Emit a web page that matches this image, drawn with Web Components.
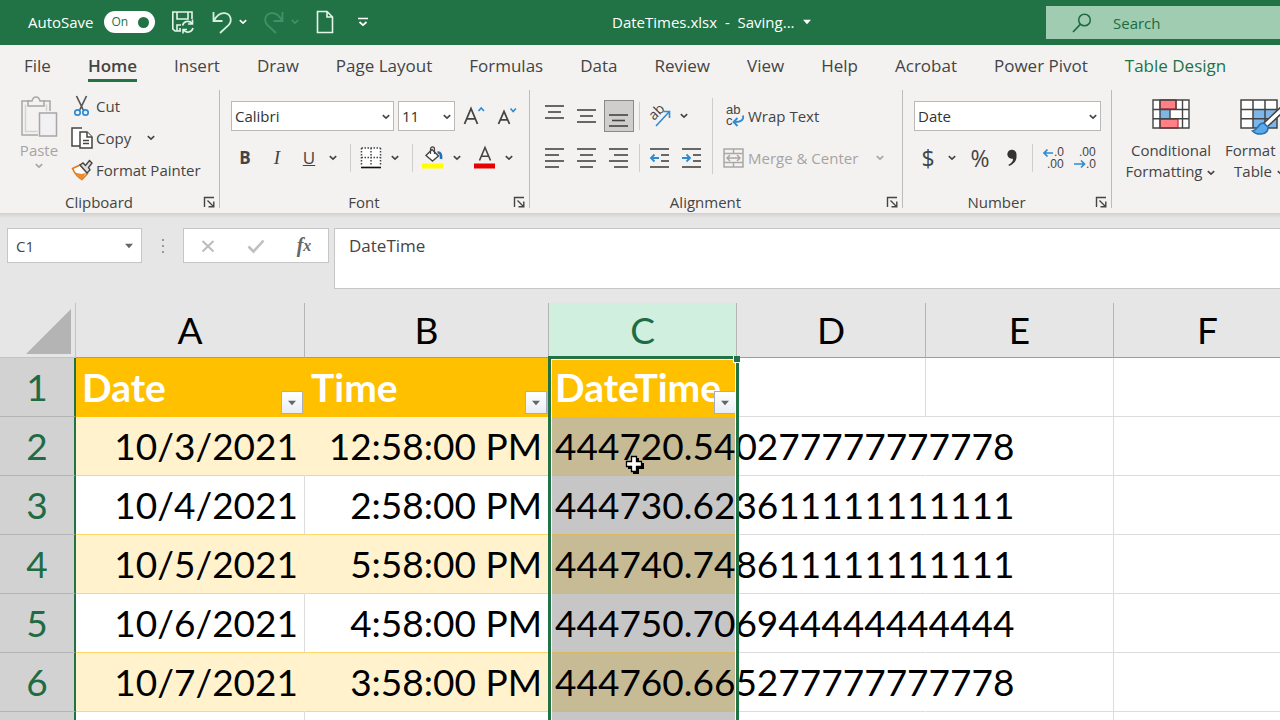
<!DOCTYPE html>
<html lang="en">
<head>
<meta charset="utf-8">
<title>DateTimes.xlsx</title>
<style>
  html, body { margin: 0; height: 100%; }
  body { font: 15px/20px "Open Sans", "Noto Sans", sans-serif; color: #444; background: #e6e6e6; overflow: hidden; }
</style>
</head>
<body>
<xl-app></xl-app>
<script>
const define = (name, html, setup) => {
  const template = document.createElement('template');
  template.innerHTML = html;
  customElements.define(name, class extends HTMLElement {
    constructor() {
      super();
      this.attachShadow({ mode: 'open' }).append(template.content.cloneNode(true));
    }
    connectedCallback() { if (setup) setup.call(this, this.shadowRoot); }
  });
};

const RESET = `
  button { font: inherit; color: inherit; background: none; border: 0; padding: 0; margin: 0; display: inline-flex; align-items: center; justify-content: center; }
`;

/* name: [width, height, markup] */
const lines = (rows) => rows.map(([x, y, w]) => `<path d="M${x} ${y}h${w}" stroke="#444" stroke-width="1.6"/>`).join('');
const digits = (x, y, text) => `<text x="${x}" y="${y}" font-family="Liberation Sans, sans-serif" font-size="12" fill="#444">${text}</text>`;
const ICONS = {
  chevron: [10, 8, '<path d="M1.800 2.200L5 5.200l3.200-3" stroke="currentColor" stroke-width="1.600"/>'],
  save: [24, 24, '<g stroke="#e4f5ea" stroke-width="1.600"><path d="M10 21H4l-2.200-2.200V2H21v7"/><path d="M6 2v7h11V2M6 21v-6h4M9 21v-3"/><path d="M11.500 15.500a5.400 5.400 0 0 1 9.500-2M22 18a5.400 5.400 0 0 1-9.500 2M21.500 9.500v4.500H17M12 23.500V19.500h4"/></g>'],
  undo: [20, 24, '<path d="M1.500 2v9h9M2 10.500C5 5 9 2.500 13 3.200c6 1 7.500 8 3.500 12L8 23" stroke="#d5efdf" stroke-width="1.800"/>'],
  redo: [20, 24, '<path d="M18.500 2v9h-9M18 10.500C15 5 11 2.500 7 3.200c-6 1-7.500 8-3.500 12L12 23" stroke="#45906a" stroke-width="1.800"/>'],
  page: [18, 24, '<path d="M1.500 1.500h9.500l5.500 5.500v15.500h-15zM11 1.500V7h5.500" stroke="#e4f5ea" stroke-width="1.600"/>'],
  customize: [12, 10, '<path d="M1 1.500h10" stroke="#fff" stroke-width="1.500"/><path d="M2.500 5L6 8.200 9.500 5" stroke="#fff" stroke-width="1.700"/>'],
  caret: [8, 6, '<path d="M0 .8h8L4 5.200z" fill="currentColor"/>'],
  search: [22, 22, '<circle cx="13.500" cy="8" r="5.800" stroke="#1b6b40" stroke-width="1.500"/><path d="M9.500 12.200L2 20" stroke="#1b6b40" stroke-width="1.700"/>'],
  paste: [38, 42, '<g stroke="#a9a7a5" stroke-width="1.500"><path d="M10 5H2v34h16M23 5h7v10"/><path d="M5.500 8.500v27h12M26.500 8.500V15" stroke="#d5d3d1"/><path d="M8 10V5h4c1-5.500 7-5.500 8 0h4v5z" fill="#f3f2f1"/><path d="M19.500 17h17v23h-17z" fill="#f1f0f3"/></g>'],
  cut: [22, 22, '<path d="M5.500 1l6.800 14M15.500 1L8.700 15" stroke="#555" stroke-width="1.700"/><circle cx="6.500" cy="17.500" r="2.700" stroke="#2f8ad0" stroke-width="1.700"/><circle cx="14.500" cy="17.500" r="2.700" stroke="#2f8ad0" stroke-width="1.700"/>'],
  copy: [22, 22, '<g stroke="#444" stroke-width="1.500" fill="#fff"><path d="M11 1H1v18h8"/><path d="M9 5h7l5 5v11H9z"/><path d="M16 5v5h5M12 13.500h6M12 16.500h6"/></g>'],
  painter: [22, 22, '<path d="M1.500 9.500L9 6l7.500 8.500-5.500 6C7 18.500 3.500 14 1.500 9.500z" fill="#fff" stroke="#e07b1f" stroke-width="1.600"/><path d="M4 13.500l6.500 1.500 4.500-1-4 6C8 18.500 5.500 16 4 13.500z" fill="#ec8b2b"/><path d="M9 6l3-2 2.500 2.500L18.500 1.500 21 4l-3.500 4.500L19 11l-3 3z" fill="#dedede" stroke="#444" stroke-width="1.400"/>'],
  launcher: [12, 12, '<path d="M1.500 11V1.500H11M4.500 4.500l6 6M10.800 5.500v5.300H5.500" stroke="#444" stroke-width="1.400"/>'],
  growfont: [22, 20, '<path d="M.5 18L7 2.500 13.500 18M2.800 12.800h8.400" stroke="#444" stroke-width="1.800"/><path d="M14.500 5l2.700-3L20 5" stroke="#2f8ad0" stroke-width="1.600"/>'],
  shrinkfont: [20, 20, '<path d="M.5 18L6 5.500 11.500 18M2.500 13.800h7" stroke="#444" stroke-width="1.800"/><path d="M12.500 2.500l2.700 3 2.700-3" stroke="#2f8ad0" stroke-width="1.600"/>'],
  borders: [22, 22, '<path d="M1.500 1h19v18h-19z" fill="#fff"/><path d="M1.500 1h19M1.500 10.500h19M1.500 1v18M11 1v18M20.500 1v18" stroke="#444" stroke-width="1.500" stroke-dasharray="1.500 1.500"/><path d="M1 20.500h20" stroke="#111" stroke-width="1.600"/>'],
  fill: [24, 24, '<path d="M1 17.500h21v5H1z" fill="#ff0"/><path d="M11 3.500l6.500 6.500-6 5-6.500-5.500z" fill="#fff" stroke="#444" stroke-width="1.400"/><path d="M9.500 8V3c0-2.800 4-2.800 4 0v5" stroke="#444" stroke-width="1.200"/><path d="M16.500 6.500c3-.5 4 2.500 3.500 6.500" stroke="#1e6fb5" stroke-width="2.600"/>'],
  fontcolor: [22, 24, '<path d="M0 17.500h21v5H0z" fill="#e60000"/><path d="M5.500 14.500L11 1.500 16.500 14.500M7.300 10.200h7.400" stroke="#444" stroke-width="1.600"/>'],
  top: [20, 24, lines([[0, 2, 19], [3, 8, 13], [0, 14, 19]])],
  middle: [20, 24, lines([[0, 6, 19], [3, 12, 13], [0, 18, 19]])],
  bottom: [20, 24, lines([[0, 11, 19], [3, 16.5, 13], [0, 22, 19]])],
  left: [20, 20, lines([[0, 1, 19], [0, 7, 14], [0, 13, 19], [0, 19, 14]])],
  center: [20, 20, lines([[0, 1, 19], [3, 7, 13], [0, 13, 19], [3, 19, 13]])],
  right: [20, 20, lines([[0, 1, 19], [5, 7, 14], [0, 13, 19], [5, 19, 14]])],
  orient: [24, 24, '<text transform="translate(6 17) rotate(-45)" font-size="14" fill="#444">ab</text><path d="M8 22L21 8M15.500 7.500h6V14" stroke="#2f8ad0" stroke-width="1.600"/>'],
  outdent: [20, 20, lines([[0, 1, 19], [11, 7, 8], [11, 13, 8], [0, 19, 19]]) + '<path d="M9 10H1.500M4.500 6.500L1 10l3.500 3.500" stroke="#2f8ad0" stroke-width="1.800"/>'],
  indent: [20, 20, lines([[0, 1, 19], [11, 7, 8], [11, 13, 8], [0, 19, 19]]) + '<path d="M0 10h7M4.500 6.500L8 10l-3.500 3.500" stroke="#2f8ad0" stroke-width="1.800"/>'],
  wrap: [22, 24, '<g font-family="Liberation Sans, sans-serif" font-size="13" fill="#444"><text x="3" y="10">ab</text><text x="3" y="21">c</text></g><path d="M20 11.500c1 4-1.500 6.500-8 6.500M14.500 14l-4 4 4 4" stroke="#2f8ad0" stroke-width="1.800"/>'],
  merge: [22, 20, '<g stroke="#aaa8a6" stroke-width="1.500"><path d="M1 1h19v18H1zM1 5.500h19M1 14.500h19M10.500 1v4.500M10.500 14.500V19"/><path d="M4 10h13M7 7l-3 3 3 3M14 7l3 3-3 3"/></g>'],
  decInc: [22, 22, digits(12, 9, '.0') + digits(5, 21, '.00') + '<path d="M11 6H2M5.500 2.500L2 6l3.500 3.500" stroke="#2f8ad0" stroke-width="1.700"/>'],
  decDec: [22, 22, digits(5, 9, '.00') + digits(12, 21, '.0') + '<path d="M0 17h10M7 13.500l3.500 3.500L7 20.500" stroke="#2f8ad0" stroke-width="1.700"/>'],
  comma: [12, 18, '<path d="M10.500 6.500C11 11.500 8 15 3 17l-.5-1.200C5.500 14 7.300 12 7 9.700A4.600 4.600 0 1 1 10.500 5z" fill="#333"/>'],
  conditional: [38, 30, '<path d="M1 1h36v28H1z" fill="#fff"/><path d="M8 1h16v9H8zM8 20h18v9H8z" fill="#ff8087" stroke="#d8303a" stroke-width="1.300"/><path d="M8 10h10v10H8z" fill="#7db7ea"/><path d="M1 1h36v28H1zM1 10.500h36M1 19.800h36M8 1v28M30.500 1v28M24 1v9M18 10v10" stroke="#444" stroke-width="1.400"/>'],
  formattable: [40, 38, '<path d="M1 1h36v28H1z" fill="#fff"/><path d="M13 10.500h24V29H13z" fill="#7db7ea"/><path d="M1 1h36v28H1zM1 10.500h36M1 19.800h36M13 1v28M25 1v28" stroke="#444" stroke-width="1.500"/><path d="M42 7L24 24l3 4L42 14" fill="#fff" stroke="#444" stroke-width="1.500"/><path d="M23.500 24c-6 0-5 7-11 8 5 5 16 4 15.500-4z" fill="#5fa8e6" stroke="#2070b5" stroke-width="1.500"/>'],
  cancel: [16, 16, '<path d="M2.500 3l11 10.500M13.500 3l-11 10.500" stroke="#bcbcbc" stroke-width="2"/>'],
  accept: [18, 16, '<path d="M1.500 8.500l5 5L16.500 2.500" stroke="#c0c0c0" stroke-width="2.600"/>'],
};

class XlIcon extends HTMLElement {
  constructor() { super(); this.attachShadow({ mode: 'open' }); }
  connectedCallback() {
    const [w, h, body] = ICONS[this.getAttribute('name')];
    this.shadowRoot.innerHTML = `<style>:host{display:inline-flex;flex:none}svg{display:block;overflow:visible}</style>
      <svg width="${w}" height="${h}" viewBox="0 0 ${w} ${h}" fill="none" aria-hidden="true">${body}</svg>`;
  }
}
customElements.define('xl-icon', XlIcon);

/* Square ribbon button; its face is slotted */
define('xl-button', `<style>${RESET}
  :host { display: inline-flex; width: 32px; height: 32px; flex: none; }
  :host([narrow]) { width: 16px; }
  :host([wide]) { width: auto; }
  :host([wide]) button { gap: 3px; padding: 0 4px; width: auto; }
  :host([dim]) { color: #a6a4a2; }
  button { width: 100%; height: 100%; box-sizing: border-box; white-space: nowrap; }
  :host([on]) button { background: #d0cecc; border: 1px solid #8c8a88; width: 30px; margin: 0 auto; }
</style><button type="button"><slot></slot></button>`, function (root) {
  root.querySelector('button').setAttribute('aria-label', this.getAttribute('label') || this.textContent.trim());
});

define('xl-combo', `<style>
  :host { display: inline-block; position: relative; height: 30px; flex: none; }
  select { appearance: none; width: 100%; height: 100%; box-sizing: border-box; border: 1px solid #bbb9b7; border-radius: 0; background: #fff; color: #333; font: inherit; padding: 0 24px 0 3px; }
  xl-icon { position: absolute; right: 3px; top: 12px; color: #444; pointer-events: none; }
</style><select><option></option></select><xl-icon name="chevron"></xl-icon>`, function (root) {
  const select = root.querySelector('select');
  select.options[0].textContent = this.getAttribute('value');
  select.setAttribute('aria-label', this.getAttribute('label'));
});

define('xl-rule', `<style>:host { display: block; width: 1px; align-self: stretch; background: #cfcdcb; margin: 2px 4px; flex: none; }</style>`);

define('xl-group', `<style>${RESET}
  :host { display: flex; flex-direction: column; flex: none; border-right: 1px solid #bdbbb9; box-sizing: border-box; height: 118px; }
  :host([last]) { border: 0; }
  .body { flex: 1; }
  footer { display: grid; grid-template-columns: 1fr 20px; align-items: center; text-align: center; height: 20px; margin-bottom: -4px; padding-left: 3px; }
  footer span { padding-right: 4px; }
  button { justify-content: center; }
</style><div class="body"><slot></slot></div><footer><span></span><button type="button"><xl-icon name="launcher"></xl-icon></button></footer>`, function (root) {
  const label = this.getAttribute('label');
  if (this.hasAttribute('last')) { root.querySelector('footer').remove(); return; }
  root.querySelector('span').textContent = label;
  root.querySelector('button').setAttribute('aria-label', label + ' settings');
});

define('xl-titlebar', `<style>${RESET}
  :host { display: flex; align-items: center; height: 45px; background: #217346; color: #fff; padding-left: 28px; flex: none; }
  .quick, .title { padding-bottom: 1px; }
  .quick { display: flex; align-items: center; }
  .pill { display: flex; align-items: center; justify-content: space-between; width: 51px; height: 22px; box-sizing: border-box; border-radius: 11px; background: #fff; color: #217346; font-size: 12px; margin: 0 16px 0 10px; padding: 0 6px 0 8px; }
  input[type=checkbox] { appearance: none; margin: 0; width: 11px; height: 11px; border-radius: 50%; background: #217346; }
  .undo { margin-left: 17px; } .redo { margin-left: 16px; color: #45906a; } .page { margin-left: 16px; } .more { margin-left: 23px; }
  .arrow { margin-left: 6px; }
  .arrow.off { color: #45906a; }
  .title { flex: 1; display: flex; justify-content: center; align-items: center; gap: 8px; padding-left: 8px; white-space: pre; }
  .search { display: flex; align-items: center; gap: 20px; width: 234px; height: 33px; box-sizing: border-box; padding-left: 25px; background: #a0cdb2; flex: none; }
  .search input { font: inherit; border: 0; background: none; min-width: 0; width: 160px; padding: 0; outline: 0; }
  .search input::placeholder { color: #1b6b40; opacity: 1; }
</style>
<div class="quick"><label for="auto">AutoSave</label><label class="pill"><span>On</span><input id="auto" type="checkbox" role="switch" checked></label>
<button type="button" aria-label="Save"><xl-icon name="save"></xl-icon></button>
<button type="button" class="undo" aria-label="Undo"><xl-icon name="undo"></xl-icon></button><button type="button" class="arrow" aria-label="Undo history"><xl-icon name="chevron"></xl-icon></button>
<button type="button" class="redo" aria-label="Redo"><xl-icon name="redo"></xl-icon></button><button type="button" class="arrow off" aria-label="Redo history"><xl-icon name="chevron"></xl-icon></button>
<button type="button" class="page" aria-label="New file"><xl-icon name="page"></xl-icon></button>
<button type="button" class="more" aria-label="Customize toolbar"><xl-icon name="customize"></xl-icon></button></div>
<div class="title"><span>DateTimes.xlsx  -  Saving...</span><xl-icon name="caret"></xl-icon></div>
<label class="search"><xl-icon name="search"></xl-icon><input type="text" placeholder="Search" aria-label="Search"></label>`);

define('xl-tabs', `<style>
  :host { display: block; flex: none; }
  nav { display: flex; gap: 37px; padding: 9px 0 7px 24px; height: 27px; font-size: 17px; line-height: 24px; white-space: nowrap; }
  a { color: inherit; text-decoration: none; height: 25px; }
  a[aria-current] { font-weight: 600; border-bottom: 3px solid #217346; }
  a.context { color: #217346; }
</style><nav></nav>`, function (root) {
  const names = ['File', 'Home', 'Insert', 'Draw', 'Page Layout', 'Formulas', 'Data', 'Review', 'View', 'Help', 'Acrobat', 'Power Pivot', 'Table Design'];
  root.querySelector('nav').innerHTML = names.map(n =>
    `<a href="#"${n === 'Home' ? ' aria-current="page"' : ''}${n === 'Table Design' ? ' class="context"' : ''}>${n}</a>`).join('');
});

const arrow = (label) => `<xl-button narrow label="${label}"><xl-icon name="chevron"></xl-icon></xl-button>`;
const tool = (icon, label, extra = '') => `<xl-button label="${label}" ${extra}><xl-icon name="${icon}"></xl-icon></xl-button>`;

define('xl-ribbon', `<style>
  :host { display: flex; overflow: hidden; padding: 2px 0 5px; flex: none; }
  .row { display: flex; align-items: center; height: 32px; }
  .stack { display: flex; flex-direction: column; gap: 10px; padding-top: 10px; }
  .stack.tight { padding-left: 9px; }
  .clip { display: flex; }
  .paste { display: flex; flex-direction: column; align-items: center; width: 70px; height: 90px; color: #a6a4a2; font: inherit; border: 0; background: none; padding: 6px 0 0 8px; gap: 2px; box-sizing: border-box; }
  .clip .rows > xl-button { display: flex; }
  .clip xl-button[wide] { margin-left: -3px; }
  .line { display: flex; gap: 8px; }
  .fonts { padding-left: 2px; gap: 4px; }
  .fonts xl-button + xl-button { margin-left: -3px; }
  .split { display: flex; }
  .tall { margin: 8px 6px 0 4px; }
  .loose { gap: 10px; }
  .gap { margin-left: 4px; }
  .big { width: 100px; font: inherit; color: inherit; border: 0; background: none; padding: 9px 0 0; line-height: 21px; display: flex; flex-direction: column; align-items: center; white-space: nowrap; flex: none; }
  .big span.face { height: 41px; }
  .big.ft { width: 78px; }
  .big xl-icon { vertical-align: middle; }
  b, i, u, .sym { font-size: 17px; }
  i { font-family: "Liberation Serif", serif; font-size: 19px; }
  .sym { font-size: 23px; }
</style>
<xl-group label="Clipboard" style="width:220px">
  <div class="clip">
    <button class="paste" type="button"><xl-icon name="paste"></xl-icon><span>Paste</span><xl-icon name="chevron"></xl-icon></button>
    <div class="rows">
      <xl-button wide><xl-icon name="cut"></xl-icon>Cut</xl-button>
      <div class="line"><xl-button wide><xl-icon name="copy"></xl-icon>Copy</xl-button>${arrow('Copy options')}</div>
      <xl-button wide><xl-icon name="painter"></xl-icon>Format Painter</xl-button>
    </div>
  </div>
</xl-group>
<xl-group label="Font" style="width:310px">
  <div class="stack tight">
    <div class="row fonts"><xl-combo label="Font" value="Calibri" style="width:163px"></xl-combo><xl-combo label="Font size" value="11" style="width:57px"></xl-combo>${tool('growfont', 'Increase font size')}${tool('shrinkfont', 'Decrease font size')}</div>
    <div class="row"><xl-button><b>B</b></xl-button><xl-button><i>I</i></xl-button><xl-button><u>U</u></xl-button>${arrow('Underline styles')}<xl-rule style="margin-left:9px"></xl-rule>${tool('borders', 'Borders')}${arrow('Border styles')}<xl-rule style="margin-left:9px"></xl-rule>${tool('fill', 'Fill color')}${arrow('Fill colors')}${tool('fontcolor', 'Font color', 'class="gap"')}${arrow('Font colors')}</div>
  </div>
</xl-group>
<xl-group label="Alignment" style="width:373px">
  <div class="split">
    <div class="stack tight">
      <div class="row">${tool('top', 'Top align')}${tool('middle', 'Middle align')}${tool('bottom', 'Bottom align', 'on')}<xl-rule></xl-rule>${tool('orient', 'Orientation')}${arrow('Orientations')}</div>
      <div class="row">${tool('left', 'Align left')}${tool('center', 'Center')}${tool('right', 'Align right')}<xl-rule></xl-rule>${tool('outdent', 'Decrease indent')}${tool('indent', 'Increase indent')}</div>
    </div>
    <xl-rule class="tall"></xl-rule>
    <div class="stack">
      <div class="row"><xl-button wide><xl-icon name="wrap"></xl-icon>Wrap Text</xl-button></div>
      <div class="row loose"><xl-button wide dim><xl-icon name="merge"></xl-icon>Merge &amp; Center</xl-button><xl-button narrow dim label="Merge options"><xl-icon name="chevron"></xl-icon></xl-button></div>
    </div>
  </div>
</xl-group>
<xl-group label="Number" style="width:209px">
  <div class="stack tight">
    <div class="row fonts"><xl-combo label="Number format" value="Date" style="width:187px"></xl-combo></div>
    <div class="row"><xl-button><span class="sym">$</span></xl-button>${arrow('Currency')}<xl-button class="gap"><span class="sym">%</span></xl-button>${tool('comma', 'Comma style')}<xl-rule></xl-rule>${tool('decInc', 'Increase decimal')}${tool('decDec', 'Decrease decimal')}</div>
  </div>
</xl-group>
<xl-group last>
  <div class="split" style="padding-left:9px">
    <button class="big" type="button"><span class="face"><xl-icon name="conditional"></xl-icon></span><span>Conditional</span><span>Formatting <xl-icon name="chevron"></xl-icon></span></button>
    <button class="big ft" type="button"><span class="face"><xl-icon name="formattable"></xl-icon></span><span>Format as</span><span>Table <xl-icon name="chevron"></xl-icon></span></button>
  </div>
</xl-group>`);

define('xl-formulabar', `<style>${RESET}
  :host { display: flex; align-items: flex-start; padding: 15px 0 14px 7px; flex: none; background: linear-gradient(#d2d0ce, #e6e6e6 5px); }
  input, textarea, .tools, .name { box-sizing: border-box; border: 1px solid #c6c6c6; background: #fff; color: #444; font: inherit; border-radius: 0; margin: 0; outline: 0; }
  .name { display: flex; align-items: center; width: 135px; height: 35px; padding-right: 8px; }
  .name input { border: 0; flex: 1; min-width: 0; padding: 0 8px; background: none; }
  .name xl-icon { color: #666; }
  .dots { width: 41px; height: 35px; display: grid; place-content: center; gap: 4px; }
  .dots i { width: 2px; height: 2px; background: #999; }
  .tools { display: flex; width: 146px; height: 35px; margin-right: 5px; }
  .tools button { flex: 1; }
  .fx { font: italic bold 20px "Liberation Serif", serif; color: #666; }
  .fx small { font-size: 16px; }
  textarea { flex: 1; height: 61px; resize: none; padding: 7px 14px; font-size: 17px; line-height: 20px; border-right: 0; }
</style>
<div class="name"><input aria-label="Name box" value="C1"><xl-icon name="caret"></xl-icon></div>
<div class="dots"><i></i><i></i><i></i></div>
<div class="tools"><button type="button" aria-label="Cancel"><xl-icon name="cancel"></xl-icon></button><button type="button" aria-label="Enter"><xl-icon name="accept"></xl-icon></button><button type="button" class="fx" aria-label="Insert function">f<small>x</small></button></div>
<textarea aria-label="Formula">DateTime</textarea>`);

define('xl-filter', `<style>${RESET}
  :host { display: block; position: absolute; right: 1px; bottom: 2px; }
  button { width: 22px; height: 23px; background: linear-gradient(#fff, #e9edf3); border: 1px solid #a9aeb8; color: #666; }
</style><button type="button" aria-label="Filter"><xl-icon name="caret"></xl-icon></button>`);

define('xl-sheet', `<style>
  :host { display: block; flex: 1; min-height: 0; overflow: hidden; position: relative; font: 37px/40px Lato, "Open Sans", sans-serif; color: #000; }
  table { table-layout: fixed; border-collapse: separate; border-spacing: 0; width: 100%; min-width: 1302px; }
  th, td { box-sizing: border-box; padding: 0; white-space: nowrap; }
  thead th { height: 55px; font-weight: 400; border-right: 1px solid #b5b5b5; border-bottom: 1px solid #9c9c9c; background: #e6e6e6; }
  thead .sel { background: #d1efdf; color: #1f6b43; }
  thead th:first-child { border-color: #c3c3c3; }
  .corner { display: block; width: 45px; height: 45px; margin: 3px 4px 0 auto; background: #b4b4b4; clip-path: polygon(100% 0, 100% 100%, 0 100%); }
  tbody th { height: 59px; font-weight: 400; color: #1f6b43; background: #d2d2d2; border-bottom: 1px solid #b5b5b5; border-right: 2px solid #217346; }
  td { height: 59px; background: #fff; border-right: 1px solid #dcdcdc; border-bottom: 1px solid #dcdcdc; padding: 0 6px; position: relative; }
  td.num { text-align: right; border-bottom-color: #ffd966; }
  td.c { z-index: 1; background: #c6c6c6; border-right: 0; border-bottom-color: #d8b862; }
  tr.band td.num { background: #fff2cc; border-right-color: #fff2cc; }
  tr.band td.c { background: #c6bb94; }
  tr.head td.h { background: #ffc000; border-color: #ffc000; color: #fff; font-size: 39px; font-weight: 700; text-align: left; }
  td.spill { border-right-color: #fff; }
  .outline { position: absolute; z-index: 2; left: 548px; top: 53px; width: 185px; bottom: -20px; border: 3px solid #217346; box-shadow: inset 0 0 0 1px #fff; pointer-events: none; }
  .outline::after { content: ""; position: absolute; right: -4px; top: -3px; width: 6px; height: 6px; background: #217346; border: solid #fff; border-width: 0 0 1px 1px; }
  .pointer { position: absolute; z-index: 3; left: 624px; top: 151px; }
</style>
<table>
  <colgroup><col style="width:76px"><col style="width:229px"><col style="width:244px"><col style="width:188px"><col style="width:189px"><col style="width:188px"><col></colgroup>
  <thead><tr><th aria-label="Select all"><span class="corner"></span></th><th>A</th><th>B</th><th class="sel">C</th><th>D</th><th>E</th><th>F</th></tr></thead>
  <tbody></tbody>
</table>
<div class="outline"></div>
<svg class="pointer" width="22" height="22" viewBox="0 0 22 22" aria-hidden="true"><path d="M9 4h6v5h5v6h-5v5H9v-5H4V9h5z"/><path d="M7.500 2.500h5v5h5v5h-5v5h-5v-5h-5v-5h5z" fill="#fff" stroke="#000" stroke-width="1.300"/></svg>`, function (root) {
  const rows = [
    ['10/3/2021', '12:58:00 PM', '444720.540277777777778'],
    ['10/4/2021', '2:58:00 PM', '444730.623611111111111'],
    ['10/5/2021', '5:58:00 PM', '444740.748611111111111'],
    ['10/6/2021', '4:58:00 PM', '444750.706944444444444'],
    ['10/7/2021', '3:58:00 PM', '444760.665277777777778'],
    ['', '', ''],
  ];
  const head = ['Date', 'Time', 'DateTime'].map((t, i) => `<td class="h${i === 2 ? ' c' : ''}">${t}<xl-filter></xl-filter></td>`).join('');
  root.querySelector('tbody').innerHTML = `<tr class="head"><th scope="row">1</th>${head}<td></td><td></td><td></td></tr>` +
    rows.map(([a, b, c], i) => `<tr class="${i % 2 ? '' : 'band'}"><th scope="row">${a ? i + 2 : ''}</th><td class="num">${a}</td><td class="num">${b}</td><td class="c">${c}</td><td class="spill"></td><td></td><td></td></tr>`).join('');
});

define('xl-app', `<style>
  :host { display: flex; flex-direction: column; height: 100vh; background: #e6e6e6; }
  .chrome { background: #f3f2f1; flex: none; }
</style>
<xl-titlebar></xl-titlebar>
<div class="chrome"><xl-tabs></xl-tabs><xl-ribbon></xl-ribbon></div>
<xl-formulabar></xl-formulabar>
<xl-sheet></xl-sheet>`);
</script>
</body>
</html>
